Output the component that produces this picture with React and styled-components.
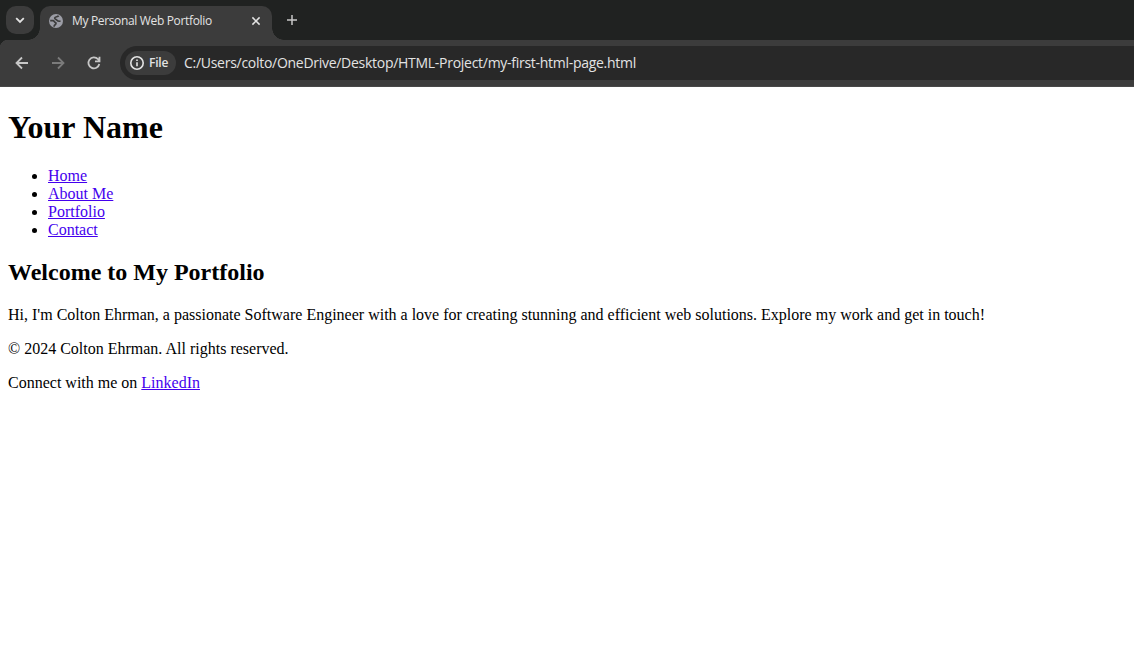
import React from "react";
import styled, { createGlobalStyle } from "styled-components";

const Global = createGlobalStyle`
  *, *::before, *::after { box-sizing: border-box; }
  html, body { margin: 0; background: #fff; }
  body { overflow: hidden; }
`;

const Browser = styled.div`
  display: flex;
  flex-direction: column;
  height: 100vh;
`;

const TabStrip = styled.div`
  display: flex;
  flex: none;
  height: 40px;
  padding: 6px 0 0 6px;
  background: #202221;
  color: #e3e3e3;
  font-family: "Open Sans", "Noto Sans", sans-serif;
`;

const TabSearch = styled.div`
  display: grid;
  place-items: center;
  width: 28px;
  height: 28px;
  margin-right: 6px;
  border-radius: 10px;
  background: #3c3c3c;
`;

const Tab = styled.div`
  position: relative;
  display: flex;
  align-items: center;
  width: 232px;
  height: 34px;
  padding: 0 9px 5px 8px;
  border-radius: 10px 10px 0 0;
  background: #3c3c3c;

  &::before, &::after {
    content: "";
    position: absolute;
    bottom: 0;
    width: 12px;
    height: 12px;
  }
  &::before {
    right: 100%;
    background: radial-gradient(circle at 0 0, transparent 11.5px, #3c3c3c 12px);
  }
  &::after {
    left: 100%;
    background: radial-gradient(circle at 100% 0, transparent 11.5px, #3c3c3c 12px);
  }
`;

const TabTitle = styled.span`
  flex: 1;
  margin-left: 8px;
  font-size: 12px;
  line-height: 16px;
  letter-spacing: -0.34px;
  white-space: nowrap;
`;

const NewTab = styled.div`
  display: grid;
  place-items: center;
  width: 28px;
  height: 28px;
  margin-left: 6px;
`;

const Toolbar = styled.div`
  display: flex;
  flex: none;
  align-items: center;
  height: 47px;
  padding: 0 0 1px 8px;
  border-bottom: 1px solid #484848;
  background: radial-gradient(circle at 8px 8px, #3c3c3c 8px, #202221 8.5px) 0 0 / 8px 8px no-repeat, #3c3c3c;
`;

const NavButton = styled.div`
  display: grid;
  place-items: center;
  width: 28px;
  height: 28px;
  margin-right: 8px;
  color: ${(p) => (p.$disabled ? "#7b7b7b" : "#c7c7c7")};
`;

const AddressBar = styled.div`
  display: flex;
  flex: 1;
  align-items: center;
  height: 34px;
  margin-left: 4px;
  padding-left: 5px;
  border-radius: 17px 0 0 17px;
  background: #282828;
  color: #e3e3e3;
  font-family: "Open Sans", "Noto Sans", sans-serif;
`;

const SchemeChip = styled.div`
  display: flex;
  align-items: center;
  width: 51px;
  height: 24px;
  padding-left: 4px;
  gap: 4px;
  border-radius: 12px;
  background: #3c3c3c;
  font-size: 12px;
  font-weight: 600;
  line-height: 16px;
  letter-spacing: -0.2px;
`;

const Url = styled.span`
  margin-left: 8px;
  font-size: 14px;
  line-height: 20px;
  letter-spacing: -0.28px;
  white-space: nowrap;
`;

const Page = styled.main`
  display: flow-root;
  flex: 1;
  padding: 1px 8px 0;
  background: #fff;
  color: #000;
  font: 16px "Liberation Serif", "Times New Roman", serif;
`;

const Heading = styled.h1`
  margin: 21px 0;
  font-size: 32px;
  line-height: 37px;
`;

const Subheading = styled.h2`
  margin: 20px 0;
  font-size: 24px;
  line-height: 27px;
`;

const LinkList = styled.ul`
  margin: 16px 0;
  padding-left: 40px;
`;

const Paragraph = styled.p`
  margin: 16px 0;
  line-height: 18px;
`;

const Link = styled.a`
  color: #4400ee;
  text-decoration: underline;
`;

const links = ["Home", "About Me", "Portfolio", "Contact"];

const Chevron = () => (
  <svg width="10" height="7" viewBox="0 0 10 7" fill="none" stroke="currentColor" strokeWidth="1.8">
    <path d="M1.2 1.2 5 5l3.8-3.8" />
  </svg>
);

const Globe = () => (
  <svg width="16" height="16" viewBox="0 0 16 16" fill="none">
    <circle cx="8" cy="8" r="7" fill="#9c9da6" />
    <path d="M10.6 2.6C10 4.1 7.2 3.3 6.7 5c-.3 1.2 1.7 1.5 2.4 2.4.5.8 1.6 1 3.4.8M2.2 7.6h2.9c1 0 1.3 1.8 2.4 2 1 .3.4 1.6-.4 2.1-.8.5-1 1-1 2" stroke="#3c3c3c" strokeWidth="1.7" />
  </svg>
);

const Close = () => (
  <svg width="14" height="14" viewBox="0 0 14 14" stroke="currentColor" strokeWidth="1.5">
    <path d="m3.4 3.4 7.2 7.2m0-7.2-7.2 7.2" />
  </svg>
);

const Plus = () => (
  <svg width="12" height="12" viewBox="0 0 12 12" stroke="#c7c7c7" strokeWidth="1.5">
    <path d="M6 1v10M1 6h10" />
  </svg>
);

const Arrow = ({ forward }) => (
  <svg width="14" height="14" viewBox="0 0 14 14" fill="none" stroke="currentColor" strokeWidth="1.8">
    <path d={forward ? "M1 7h11M7 1.5 12.5 7 7 12.5" : "M13 7H2M7 1.5 1.5 7 7 12.5"} />
  </svg>
);

const Reload = () => (
  <svg width="16" height="16" viewBox="0 0 16 16" fill="none" stroke="currentColor" strokeWidth="1.8">
    <path d="M13.3 9A5.5 5.5 0 1 1 12 4.2l1.2 1.3M13.5 1.7v4.6H9" />
  </svg>
);

const Info = () => (
  <svg width="16" height="16" viewBox="0 0 16 16" fill="none" stroke="currentColor" strokeWidth="1.6">
    <circle cx="8" cy="8" r="6.2" />
    <path d="M8 7.2v4M8 4.5v1.6" />
  </svg>
);

export default function App() {
  return (
    <Browser>
      <Global />
      <TabStrip>
        <TabSearch><Chevron /></TabSearch>
        <Tab>
          <Globe />
          <TabTitle>My Personal Web Portfolio</TabTitle>
          <Close />
        </Tab>
        <NewTab><Plus /></NewTab>
      </TabStrip>
      <Toolbar>
        <NavButton><Arrow /></NavButton>
        <NavButton $disabled><Arrow forward /></NavButton>
        <NavButton><Reload /></NavButton>
        <AddressBar>
          <SchemeChip><Info />File</SchemeChip>
          <Url>C:/Users/colto/OneDrive/Desktop/HTML-Project/my-first-html-page.html</Url>
        </AddressBar>
      </Toolbar>
      <Page>
        <Heading>Your Name</Heading>
        <LinkList>
          {links.map((label) => (
            <li key={label}><Link href="#">{label}</Link></li>
          ))}
        </LinkList>
        <Subheading>Welcome to My Portfolio</Subheading>
        <Paragraph>
          Hi, I'm Colton Ehrman, a passionate Software Engineer with a love for creating stunning and efficient web solutions. Explore my work and get in touch!
        </Paragraph>
        <Paragraph>© 2024 Colton Ehrman. All rights reserved.</Paragraph>
        <Paragraph>Connect with me on <Link href="#">LinkedIn</Link></Paragraph>
      </Page>
    </Browser>
  );
}
